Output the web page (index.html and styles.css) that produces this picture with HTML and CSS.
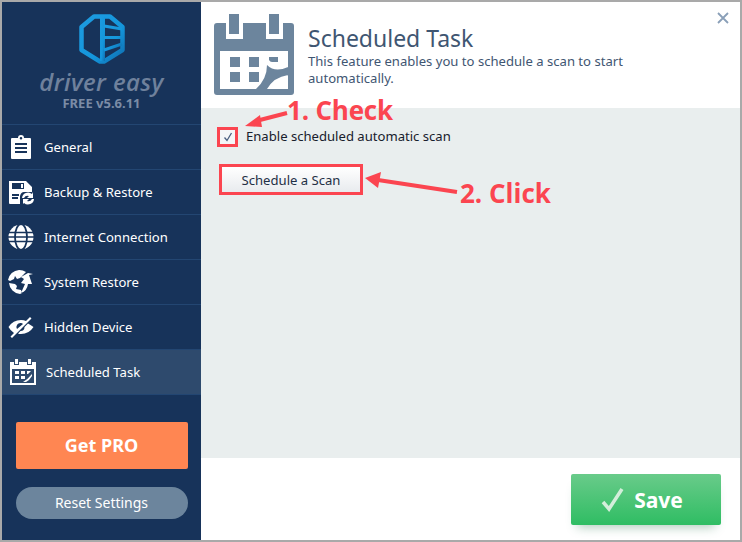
FILE: index.html
```html
<!DOCTYPE html>
<html lang="en">
<head>
    <meta charset="UTF-8">
    <title>Driver Easy - Scheduled Task</title>
    <link rel="stylesheet" href="styles.css">
</head>
<body>
    <div class="window">
        <aside class="sidebar">
            <div class="brand">
                <svg class="brand-mark" width="46" height="50" viewBox="0 0 46 50">
                    <defs>
                        <linearGradient id="markFill" x1="0" y1="0" x2="1" y2="1">
                            <stop offset="0" stop-color="#1d9be0"/>
                            <stop offset="0.6" stop-color="#1496dc"/>
                            <stop offset="1" stop-color="#0f6fb0"/>
                        </linearGradient>
                    </defs>
                    <path fill="none" stroke="url(#markFill)" stroke-width="4.500" stroke-linejoin="round" d="M15 2.500H31L43.500 13V36L25 47.500H21L2.500 36V13z"/>
                    <path fill="url(#markFill)" d="M21 3h5v44h-5z"/>
                    <path fill="none" stroke="url(#markFill)" stroke-width="3" d="M25 12l18 3M25 23.500h18M25 36l18-6"/>
                </svg>
                <div class="brand-name">driver easy</div>
                <div class="brand-version">FREE v5.6.11</div>
            </div>
            <nav class="menu">
                <a class="menu-item">
                    <svg class="menu-icon" viewBox="0 0 26 26"><path fill="#fff" fill-rule="evenodd" d="M4 4h6q0-3 3-3t3 3h6q1 0 1 1v19q0 1-1 1H4q-1 0-1-1V5q0-1 1-1zm9-1a1.300 1.300 0 1 0 0 2.600 1.300 1.300 0 0 0 0-2.600zM7 9v2h12V9zm0 4v2h12v-2zm0 4v2h12v-2zm0-6z"/></svg>
                    General
                </a>
                <a class="menu-item">
                    <svg class="menu-icon" viewBox="0 0 26 26"><path fill="#fff" fill-rule="evenodd" d="M1 2h17l6 6v5h-8q-3 0-4 4v8H2q-1 0-1-1zm3 2v6h12V4zm9 1h2v4h-2zM4 15v2h7v-2zm0 3v2h6v-2z"/><path fill="#fff" d="M14 20a6 6 0 0 1 10-4l1-2v6h-6l2-2a4 4 0 0 0-5 2zM26 21a6 6 0 0 1-10 4l-1 1v-5h6l-2 2a4 4 0 0 0 5-2z" transform="translate(0 -1)"/></svg>
                    Backup &amp; Restore
                </a>
                <a class="menu-item">
                    <svg class="menu-icon" viewBox="0 0 26 26"><circle cx="13" cy="13" r="12.500" fill="#fff"/><ellipse cx="13" cy="13" rx="6" ry="13" fill="none" stroke="#17335a" stroke-width="1.800"/><path d="M0 8.500h26M0 17.500h26M0 13h26" stroke="#17335a" stroke-width="1.500"/></svg>
                    Internet Connection
                </a>
                <a class="menu-item">
                    <svg class="menu-icon" viewBox="0 0 26 26"><path fill="#fff" d="M11 1a12 12 0 0 1 7 2l-6 6-3 1-2-3-1 3-4 2-2-1A12 12 0 0 1 11 1zM1 14l6 1 2 2-1 3 5 1 1 3-2 1A12 12 0 0 1 1 14zM16 10l-3 4 4 1-4 9q6-2 7-9h4l-3-9 4-1-5-1-7 4z"/></svg>
                    System Restore
                </a>
                <a class="menu-item">
                    <svg class="menu-icon" viewBox="0 0 26 26"><path fill="#fff" fill-rule="evenodd" d="M13 6q3 0 5 1l4-4 1.500 1.500L4 24l-1.500-1.500L6 19q-4-3-5.500-6Q5 6 13 6zM13 9a4 4 0 0 0-4 6l6-5q-1-1-2-1zM20 9.500q3 1.500 5.500 3.500Q21 20 13 20q-2 0-3-.5l2.500-2.500a4 4 0 0 0 4-4z"/></svg>
                    Hidden Device
                </a>
                <a class="menu-item is-active">
                    <svg class="menu-icon" viewBox="0 0 26 26"><path fill="#fff" fill-rule="evenodd" d="M0 3h4v3h5V3h8v3h5V3h4v23H0zM2 10v14h22V10zM5 0h3v5H5zM18 0h3v5h-3zM5 12h4v3H5zM11 12h4v3h-4zM5 17h4v3H5zM11 17h4v3h-4zM17 12h4l-3 3h-1zM22 15v2l-3 4-3 2h-3q5-3 9-8z"/></svg>
                    Scheduled Task
                </a>
            </nav>
            <a class="btn-pro">Get PRO</a>
            <a class="btn-reset">Reset Settings</a>
        </aside>
        <main class="main">
            <header class="page-head">
                <svg class="page-icon" width="80" height="82" viewBox="0 0 80 82"><path fill="#6c859d" fill-rule="evenodd" d="M3 9h9v16h17V9h23v16h17V9h8q3 0 3 3v66q0 3-3 3H3q-3 0-3-3V12q0-3 3-3zM6 37v38h68V37zM15 0h10v20H15zM55 0h10v20H55zM16 43h10v10H16zM35 43h10v10H35zM16 58h10v10H16zM35 58h10v10H35zM55 43h9v5h-6q-2 0-3-2zM53 51q8 8 21 2v8q-14 2-21 14h-11q11-10 11-24z"/></svg>
                <div class="head-text">
                    <h1>Scheduled Task</h1>
                    <p>This feature enables you to schedule a scan to start automatically.</p>
                </div>
                <button class="close-btn">
                    <svg width="14" height="14" viewBox="0 0 14 14"><path d="M2 2l10 10M12 2L2 12" stroke="#8a9fb8" stroke-width="1.800" fill="none"/></svg>
                </button>
            </header>
            <section class="content">
                <label class="check-row">
                    <span class="check-box">
                        <svg width="10" height="10" viewBox="0 0 10 10"><path d="M1.500 5.500L4 8.500L8.500 1" stroke="#4a5f80" stroke-width="1.300" fill="none"/></svg>
                    </span>
                    Enable scheduled automatic scan
                </label>
                <button class="scan-btn">Schedule a Scan</button>
            </section>
            <footer class="page-foot">
                <button class="save-btn">
                    <svg width="24" height="26" viewBox="0 0 24 26"><path d="M2 15l6 7L21 2" stroke="#d3eeda" stroke-width="3.500" fill="none"/></svg>
                    Save
                </button>
            </footer>
        </main>

        <!-- annotations drawn on top of the screenshot -->
        <svg class="notes" width="742" height="542" viewBox="0 0 742 542">
            <path d="M287 113L256 121" stroke="#fb4550" stroke-width="4" fill="none"/>
            <path d="M245 126L260 115L262 127z" fill="#fb4550"/>
            <path d="M457 192L378 180" stroke="#fb4550" stroke-width="4" fill="none"/>
            <path d="M365 178L381 172L378 188z" fill="#fb4550"/>
        </svg>
        <span class="note note-check">1. Check</span>
        <span class="note note-click">2. Click</span>
    </div>
</body>
</html>
```

FILE: styles.css
```css
* {
    margin: 0;
    padding: 0;
    box-sizing: border-box;
}

body {
    width: 742px;
    height: 542px;
    overflow: hidden;
    background-color: #fff;
    font-family: 'Noto Sans', sans-serif;
}

.window {
    position: relative;
    display: flex;
    width: 742px;
    height: 542px;
    border: 2px solid #a9a9a9;
}

.sidebar {
    width: 199px;
    flex-shrink: 0;
    background-color: #17335a;
    display: flex;
    flex-direction: column;
    align-items: center;
}

.brand {
    height: 122px;
    padding-top: 12px;
    display: flex;
    flex-direction: column;
    align-items: center;
}

.brand-name {
    margin-top: 6px;
    font-family: 'Open Sans', sans-serif;
    font-style: italic;
    font-weight: 600;
    font-size: 24px;
    line-height: 24px;
    letter-spacing: 0.4px;
    color: #6f819c;
}

.brand-version {
    margin-top: 1px;
    font-size: 13px;
    font-weight: 700;
    line-height: 16px;
    color: #7b8ca6;
}

.menu {
    width: 100%;
    border-top: 1px solid #234672;
}

.menu-item {
    height: 45px;
    padding-left: 6px;
    display: flex;
    align-items: center;
    gap: 10px;
    border-bottom: 1px solid #234672;
    color: #fff;
    font-size: 13.1px;
}

.menu-item.is-active {
    background-color: #2e4a6d;
    padding-left: 8px;
}

.menu-icon {
    width: 26px;
    height: 26px;
}

.btn-pro {
    margin-top: 27px;
    width: 172px;
    height: 47px;
    background-color: #ff8652;
    border-radius: 2px;
    color: #fff;
    font-size: 18px;
    font-weight: 700;
    text-align: center;
    line-height: 46px;
}

.btn-reset {
    margin-top: 18px;
    width: 172px;
    height: 32px;
    background-color: #6c859d;
    border-radius: 16px;
    color: #fff;
    font-size: 14px;
    text-align: center;
    line-height: 32px;
}

.main {
    flex: 1;
    display: flex;
    flex-direction: column;
    min-width: 0;
}

.page-head {
    height: 106px;
    padding: 12px 0 0 13px;
    display: flex;
    position: relative;
}

.page-icon {
    flex-shrink: 0;
}

.head-text {
    margin: 9px 0 0 14px;
    width: 330px;
    color: #3f5672;
}

.head-text h1 {
    font-size: 23px;
    font-weight: 400;
    line-height: 30px;
}

.head-text p {
    font-size: 13.1px;
    line-height: 17px;
}

.close-btn {
    position: absolute;
    top: 9px;
    right: 9px;
    width: 16px;
    height: 16px;
    background: none;
    border: 0;
}

.content {
    height: 350px;
    padding: 19px 0 0 16px;
    background-color: #e9eeee;
}

.check-row {
    display: flex;
    align-items: flex-start;
    gap: 8px;
    height: 20px;
    color: #17202c;
    font-size: 13.1px;
    line-height: 19px;
}

.check-box {
    width: 21px;
    height: 20px;
    border: 3px solid #fb4550;
    background-color: #f4f6f8;
    display: flex;
    align-items: center;
    justify-content: center;
}

.scan-btn {
    display: block;
    margin: 17px 0 0 2px;
    width: 144px;
    height: 31px;
    border: 3px solid #fb4550;
    background: linear-gradient(#fff, #e8ebee);
    color: #1f3046;
    font-family: inherit;
    font-size: 13.1px;
}

.page-foot {
    flex: 1;
    display: flex;
    justify-content: flex-end;
    padding: 16px 19px 0 0;
}

.save-btn {
    width: 150px;
    height: 51px;
    padding-right: 8px;
    border: 0;
    border-radius: 2px;
    background: linear-gradient(#69cb8a, #2fbd63);
    box-shadow: 0 8px 10px -6px rgba(47, 120, 80, 0.4);
    color: #fff;
    font-family: inherit;
    font-size: 21px;
    font-weight: 700;
    display: flex;
    align-items: center;
    justify-content: center;
    gap: 9px;
}

.notes {
    position: absolute;
    top: -2px;
    left: -2px;
    pointer-events: none;
}

.note {
    position: absolute;
    color: #fb4550;
    font-family: 'Open Sans', sans-serif;
    font-size: 26px;
    font-weight: 700;
    line-height: 32px;
    white-space: nowrap;
}

.note-check {
    top: 92px;
    left: 285px;
    letter-spacing: -0.2px;
}

.note-click {
    top: 175px;
    left: 458px;
}
```
